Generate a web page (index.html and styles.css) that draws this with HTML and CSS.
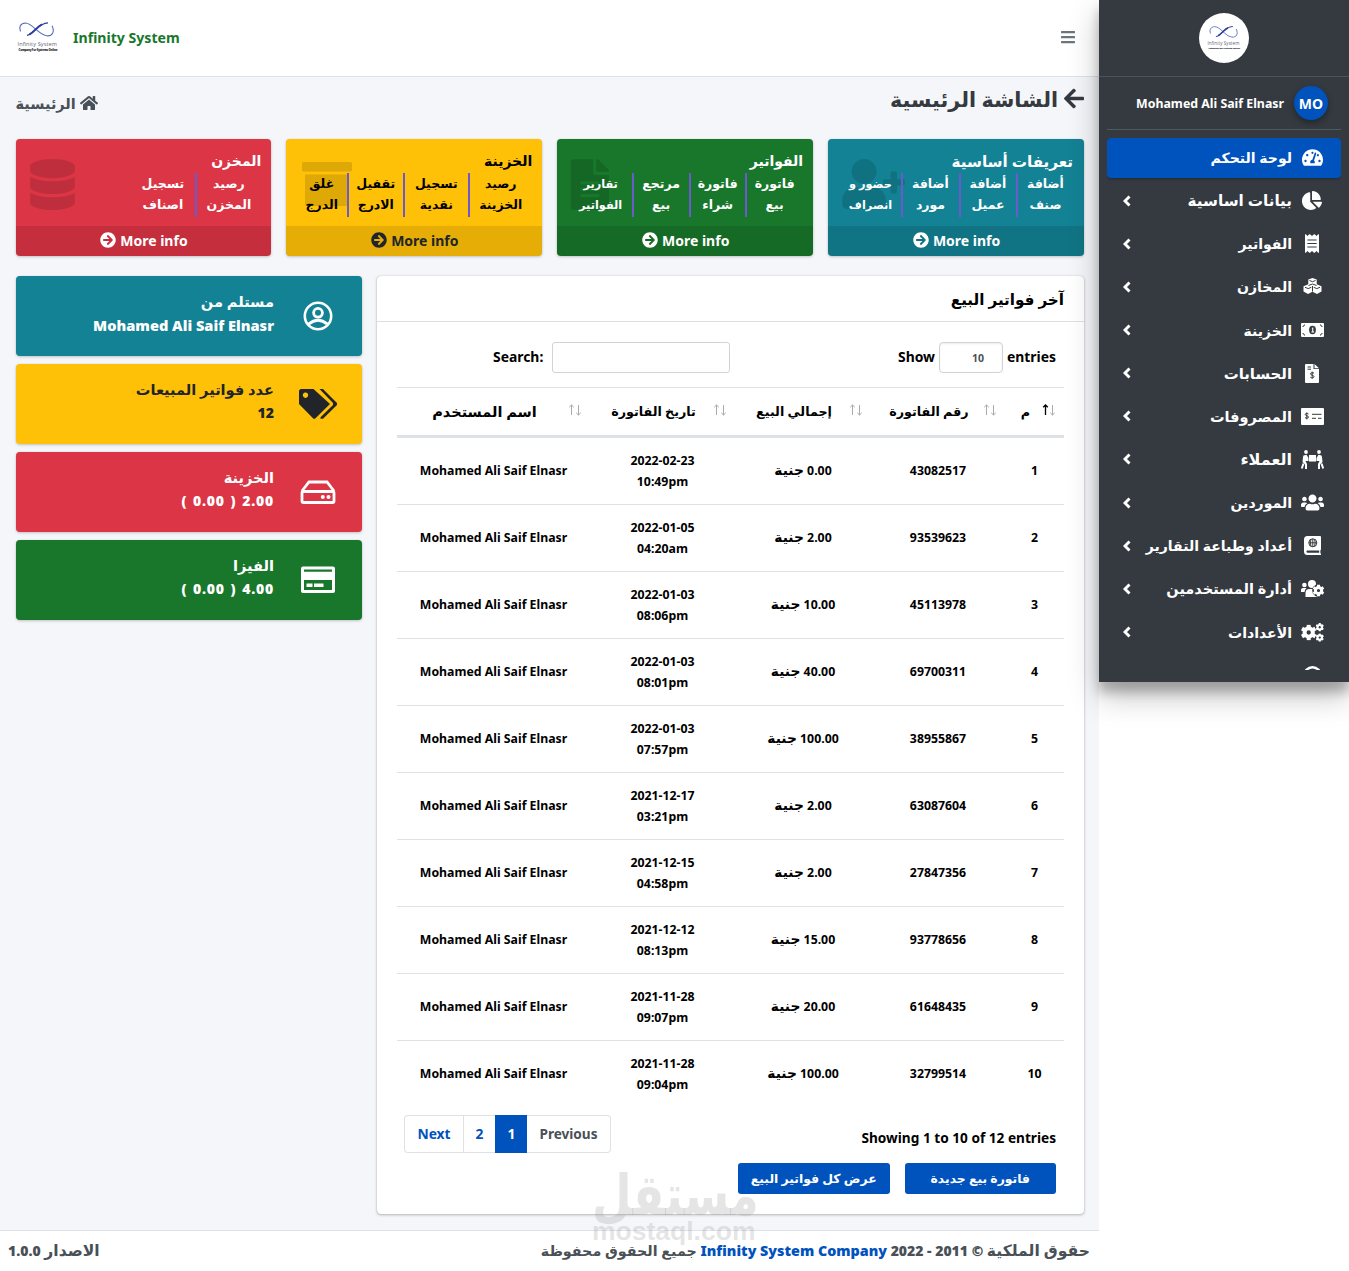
FILE: index.html
```html
<!DOCTYPE html>
<html lang="ar" dir="rtl">
<head>
<meta charset="utf-8">
<title>Infinity System</title>
<link rel="stylesheet" href="styles.css">
</head>
<body>
<svg class="defs" width="0" height="0" aria-hidden="true">
  <symbol id="go" viewBox="0 0 512 512"><path d="M256 8c137 0 248 111 248 248S393 504 256 504 8 393 8 256 119 8 256 8zm-28.9 143.6l75.5 72.4H120c-13.3 0-24 10.7-24 24v16c0 13.3 10.7 24 24 24h182.6l-75.5 72.4c-9.7 9.3-9.9 24.8-.4 34.3l11 10.9c9.4 9.4 24.6 9.4 33.9 0L404.3 273c9.4-9.4 9.4-24.6 0-33.9L271.6 106.3c-9.4-9.4-24.6-9.4-33.9 0l-11 10.9c-9.5 9.6-9.3 25.1.4 34.4z"/></symbol>
  <symbol id="chev" viewBox="0 0 8 12"><path d="M6.500 1.500L2 6l4.500 4.500" fill="none" stroke="currentColor" stroke-width="2.900"/></symbol>
  <symbol id="gear" viewBox="-10 -10 20 20"><circle r="5.200" fill="none" stroke="currentColor" stroke-width="5"/><g stroke="currentColor" stroke-width="5"><path d="M0-9.800V-6M0 6v3.800M-8.400-4.900L-5-3M5 3l3.400 1.900M-8.400 4.900L-5 3M5-3l3.400-1.900"/></g></symbol>
  <symbol id="sort" viewBox="0 0 14 12"><path d="M3.500 1v10M1.200 3.200L3.500 1l2.300 2.200M10.500 1v10M8.200 8.800l2.300 2.200 2.300-2.200" fill="none"/></symbol>
  <symbol id="sort-asc" viewBox="0 0 14 12"><path d="M3.500 1v10M1.200 3.200L3.500 1l2.300 2.200" fill="none" stroke="#000" stroke-width="1.300"/><path d="M10.500 1v10M8.200 8.800l2.300 2.200 2.300-2.200" fill="none"/></symbol>
  <symbol id="mark" viewBox="0 0 42 17">
    <path d="M4.500 10.500C2.500 6 4.500 2.200 9.500 2c7 0 12.500 11.500 21 12.800 6 .8 8.500-4 5.500-10" fill="none" stroke="#5a6fc0" stroke-width="1.100"/>
    <path d="M11 14.300c7-.8 10.500-12.300 21-12.500" fill="none" stroke="#2c3e9e" stroke-width="1.200"/><path d="M13.500 13.300c5-2.500 7.500-7.800 12.500-10" fill="none" stroke="#2c3e9e" stroke-width="2"/>
  </symbol>
</svg>
<div class="app">
  <aside class="sidebar">
    <div class="brand"><span class="brand-logo"><svg viewBox="0 0 42 32"><use href="#mark" width="42" height="17" y="0"/><text x="0.500" y="24.500" textLength="39.500">Infinity System</text><text class="tag" x="2" y="29.500" textLength="39">Company For Systems Online</text></svg></span></div>
    <div class="user"><span class="avatar">MO</span><span>Mohamed Ali Saif Elnasr</span></div>
    <nav class="nav">
      <a class="item active"><i><svg width="21" height="19" viewBox="0 0 576 512"><path d="M288 32C128.940 32 0 160.940 0 320c0 52.800 14.250 102.260 39.060 144.800 5.610 9.620 16.300 15.200 27.440 15.200h443c11.140 0 21.830-5.580 27.440-15.200C561.750 422.260 576 372.800 576 320c0-159.060-128.940-288-288-288zm0 64c14.710 0 26.580 10.130 30.320 23.650-1.110 2.260-2.640 4.230-3.450 6.670l-9.220 27.670c-5.130 3.490-10.970 6.010-17.640 6.010-17.670 0-32-14.330-32-32S270.330 96 288 96zM96 384c-17.670 0-32-14.330-32-32s14.330-32 32-32 32 14.330 32 32-14.330 32-32 32zm48-160c-17.670 0-32-14.330-32-32s14.330-32 32-32 32 14.330 32 32-14.330 32-32 32zm246.770-72.410l-61.330 184C343.130 347.330 352 364.540 352 384c0 11.720-3.380 22.550-8.880 32H232.880c-5.500-9.450-8.880-20.280-8.880-32 0-33.940 26.500-61.430 59.900-63.590l61.340-184.010c4.170-12.560 17.730-19.450 30.360-15.170 12.570 4.190 19.350 17.790 15.170 30.360zm14.660 57.200l15.520-46.550c3.470-1.290 7.130-2.230 11.050-2.230 17.670 0 32 14.330 32 32s-14.330 32-32 32c-11.380-.01-20.890-6.280-26.570-15.220zM480 384c-17.670 0-32-14.330-32-32s14.330-32 32-32 32 14.330 32 32-14.330 32-32 32z"/></svg></i><span>لوحة التحكم</span></a>
      <a class="item"><i><svg width="20" height="19" viewBox="0 0 544 512"><path d="M527.790 288H290.500l158.030 158.030c6.040 6.040 15.980 6.530 22.190.68 38.700-36.460 65.320-85.610 73.130-140.860 1.340-9.460-6.510-17.850-16.060-17.850zm-15.830-64.800C503.720 103.740 408.260 8.280 288.800.04 279.680-.59 272 7.100 272 16.240V240h223.770c9.140 0 16.820-7.680 16.190-16.800zM224 288V50.710c0-9.550-8.390-17.400-17.840-16.060C86.990 51.490-4.100 155.600.14 280.370 4.500 408.510 114.830 513.590 243.030 511.980c50.400-.63 96.970-16.870 135.260-44.030 7.900-5.600 8.420-17.230 1.570-24.080L224 288z"/></svg></i><span class="w3">بيانات اساسية</span><svg class="chev"><use href="#chev"/></svg></a>
      <a class="item"><i><svg width="14" height="19" viewBox="0 0 384 512"><path d="M358.400 3.200L320 48 265.600 3.200a15.900 15.900 0 0 0-19.200 0L192 48 137.600 3.200a15.900 15.900 0 0 0-19.200 0L64 48 25.600 3.200C15-4.700 0 2.800 0 16v480c0 13.200 15 20.700 25.600 12.800L64 464l54.400 44.800a15.900 15.900 0 0 0 19.200 0L192 464l54.400 44.800a15.900 15.900 0 0 0 19.200 0L320 464l38.400 44.800c10.500 7.900 25.600.4 25.600-12.800V16c0-13.200-15-20.700-25.600-12.800zM320 360c0 4.400-3.600 8-8 8H72c-4.400 0-8-3.600-8-8v-16c0-4.400 3.600-8 8-8h240c4.400 0 8 3.600 8 8v16zm0-96c0 4.400-3.600 8-8 8H72c-4.400 0-8-3.600-8-8v-16c0-4.400 3.600-8 8-8h240c4.400 0 8 3.600 8 8v16zm0-96c0 4.400-3.600 8-8 8H72c-4.400 0-8-3.600-8-8v-16c0-4.400 3.600-8 8-8h240c4.400 0 8 3.600 8 8v16z"/></svg></i><span>الفواتير</span><svg class="chev"><use href="#chev"/></svg></a>
      <a class="item"><i><svg width="19" height="17" viewBox="0 0 19 17"><path d="M9.500 0l4.200 1.600v4.600l4.800 2v5.400L14 16l-4.500-2.200L5 16 .5 13.600V8.200l4.800-2V1.600z"/><path class="cut" d="M6.500 2.500l3 1.200 3-1.200M9.500 6l-4 1.500M9.500 6l4 1.500M2 9.300l3.200 1.300L8.300 9.300M10.700 9.300l3.100 1.300L17 9.300M9.500 8v5.500"/></svg></i><span>المخازن</span><svg class="chev"><use href="#chev"/></svg></a>
      <a class="item"><i><svg width="23" height="14" viewBox="0 0 23 14"><rect width="23" height="14" rx="1"/><ellipse class="hole" cx="11.500" cy="7" rx="3.400" ry="4.200"/><path d="M10.600 5.200l1-.6h.7v4h.8v.8h-2.700v-.8h.8V5.600z"/><path class="cut" d="M1.500 3.500a2 2 0 0 0 2-2M19.500 1.500a2 2 0 0 0 2 2M1.500 10.500a2 2 0 0 1 2 2M19.500 12.500a2 2 0 0 1 2-2"/></svg></i><span>الخزينة</span><svg class="chev"><use href="#chev"/></svg></a>
      <a class="item"><i><svg width="14" height="19" viewBox="0 0 14 19"><path d="M1 0h7.500v5H14v13a1 1 0 0 1-1 1H1a1 1 0 0 1-1-1V1a1 1 0 0 1 1-1zM9.500 0L14 4.200H9.500z"/><path class="cut" d="M2.500 3H6M2.500 5.200H6M9 9.200c-1.200-.8-3.500-.8-3.500.7 0 1.600 3.500 1 3.500 2.800 0 1.500-2.500 1.500-3.700.6M7.200 7.600v7"/></svg></i><span class="w2">الحسابات</span><svg class="chev"><use href="#chev"/></svg></a>
      <a class="item"><i><svg width="23" height="17" viewBox="0 0 23 17"><rect width="23" height="17" rx="1"/><path class="cut" d="M11 6.300h9.500M11 10.300h4M17 10.300h3.500M7.500 5.900c-1.200-.8-3.300-.7-3.300.6 0 1.500 3.300.9 3.300 2.600 0 1.400-2.300 1.400-3.500.5M5.800 4.400v7"/></svg></i><span class="w1">المصروفات</span><svg class="chev"><use href="#chev"/></svg></a>
      <a class="item"><i><svg width="23" height="19" viewBox="0 0 23 19"><circle cx="5" cy="2" r="1.900"/><circle cx="18" cy="2" r="1.900"/><rect x="8" y="5" width="7" height="6.500"/><path d="M2.500 5.500l3-.7 2 3.200v3H4.500L6 14v5H4v-4.500L1.500 12 2 7zM20.500 5.500l-3-.7-2 3.200v3h3L17 14v5h2v-4.500l2.500-2.500-.5-5z"/><path d="M2.500 13.500L.8 18.500M20.500 13.500l1.700 5" stroke="currentColor" stroke-width="2"/></svg></i><span class="w4">العملاء</span><svg class="chev"><use href="#chev"/></svg></a>
      <a class="item"><i><svg width="23" height="19" viewBox="0 0 640 512"><path d="M96 224c35.300 0 64-28.700 64-64s-28.700-64-64-64-64 28.700-64 64 28.700 64 64 64zm448 0c35.300 0 64-28.700 64-64s-28.700-64-64-64-64 28.700-64 64 28.700 64 64 64zm32 32h-64c-17.600 0-33.500 7.100-45.100 18.600 40.300 22.100 68.900 62 75.100 109.400h66c17.700 0 32-14.300 32-32v-32c0-35.300-28.700-64-64-64zm-256 0c61.900 0 112-50.100 112-112S381.900 32 320 32 208 82.100 208 144s50.100 112 112 112zm76.800 32h-8.300c-20.800 10-43.900 16-68.500 16s-47.600-6-68.500-16h-8.300C179.600 288 128 339.600 128 403.200V432c0 26.500 21.500 48 48 48h288c26.500 0 48-21.500 48-48v-28.800c0-63.600-51.600-115.200-115.200-115.200zm-223.700-13.400C161.500 263.100 145.600 256 128 256H64c-35.300 0-64 28.700-64 64v32c0 17.700 14.300 32 32 32h65.900c6.300-47.400 34.900-87.300 75.200-109.400z"/></svg></i><span>الموردين</span><svg class="chev"><use href="#chev"/></svg></a>
      <a class="item"><i><svg width="17" height="19" viewBox="0 0 17 19"><path d="M3.500 0H16a1 1 0 0 1 1 1v12.500l-.6.800v3l.6.500V19H3.500A3.500 3.500 0 0 1 0 15.500v-12A3.500 3.500 0 0 1 3.500 0z"/><path class="hole" d="M3.500 14.500h11.700v2.200H3.500a1.100 1.100 0 0 1 0-2.200z"/><circle class="cut" cx="8.800" cy="6.800" r="4"/><path class="cut" d="M4.800 6.800h8M8.800 2.800v8M7 3.400q-1.200 3.400 0 6.800M10.600 3.400q1.200 3.400 0 6.800"/></svg></i><span>أعداد وطباعة التقارير</span><svg class="chev"><use href="#chev"/></svg></a>
      <a class="item"><i><svg width="23" height="17" viewBox="0 0 23 17"><circle cx="3.400" cy="5" r="2.300"/><circle cx="11" cy="4" r="4"/><path d="M0 12V9.500A2 2 0 0 1 2 8h3.500Q3.500 10 3.500 12zM4.500 17v-4q0-4 4-4h5l3 8z"/><g transform="translate(17.500 10.500) scale(.6)"><circle r="10.500" class="hole"/><use href="#gear" x="-10" y="-10" width="20" height="20"/></g></svg></i><span class="w1">أدارة المستخدمين</span><svg class="chev"><use href="#chev"/></svg></a>
      <a class="item"><i><svg width="23" height="19" viewBox="0 0 23 19"><use href="#gear" x="-.3" y="1.500" width="16" height="16"/><use href="#gear" x="14.500" y="0" width="8.500" height="8.500"/><use href="#gear" x="14.500" y="10.300" width="8.500" height="8.500"/></svg></i><span>الأعدادات</span><svg class="chev"><use href="#chev"/></svg></a>
      <a class="item"><i><svg width="19" height="19" viewBox="0 0 19 19"><circle cx="9.500" cy="9.500" r="8.200" fill="none" stroke="currentColor" stroke-width="2.400"/></svg></i></a>
    </nav>
  </aside>

  <div class="page">
    <header class="topbar">
      <svg class="bars" viewBox="0 0 448 512"><path d="M16 132h416c8.800 0 16-7.200 16-16V76c0-8.800-7.200-16-16-16H16C7.200 60 0 67.200 0 76v40c0 8.800 7.200 16 16 16zm0 160h416c8.800 0 16-7.200 16-16v-40c0-8.800-7.200-16-16-16H16c-8.800 0-16 7.200-16 16v40c0 8.800 7.200 16 16 16zm0 160h416c8.800 0 16-7.200 16-16v-40c0-8.800-7.200-16-16-16H16c-8.800 0-16 7.200-16 16v40c0 8.800 7.200 16 16 16z"/></svg>
      <div class="site"><svg viewBox="0 0 42 32"><use href="#mark" width="42" height="17" y="0"/><text x="1.500" y="24.500" textLength="39.500">Infinity System</text><text class="tag" x="2.500" y="29.500" textLength="39">Company For Systems Online</text></svg><span>Infinity System</span></div>
    </header>

    <main class="content">
      <div class="heading">
        <h1><svg width="20" height="23" viewBox="0 0 448 512"><path d="M257.500 445.100l-22.200 22.200c-9.400 9.400-24.600 9.400-33.900 0L7 273c-9.400-9.400-9.400-24.600 0-33.900L201.400 44.700c9.400-9.400 24.600-9.400 33.900 0l22.200 22.200c9.500 9.500 9.300 25-.4 34.300L136.600 216H424c13.300 0 24 10.700 24 24v32c0 13.300-10.700 24-24 24H136.600l120.500 114.800c9.800 9.300 10 24.800.4 34.300z"/></svg><span>الشاشة الرئيسية</span></h1>
        <div class="crumb"><svg width="18" height="16" viewBox="0 0 576 512"><path d="M280.370 148.260L96 300.110V464a16 16 0 0 0 16 16l112.060-.29a16 16 0 0 0 15.920-16V368a16 16 0 0 1 16-16h64a16 16 0 0 1 16 16v95.640a16 16 0 0 0 16 16.050L464 480a16 16 0 0 0 16-16V300L295.670 148.260a12.190 12.190 0 0 0-15.300 0zM571.600 251.470L488 182.560V44.050a12 12 0 0 0-12-12h-56a12 12 0 0 0-12 12v72.610L318.470 43a48 48 0 0 0-61 0L4.340 251.470a12 12 0 0 0-1.600 16.900l25.500 31A12 12 0 0 0 45.150 301l235.220-193.740a12.190 12.190 0 0 1 15.300 0L530.900 301a12 12 0 0 0 16.900-1.600l25.500-31a12 12 0 0 0-1.700-16.930z"/></svg><span>الرئيسية</span></div>
      </div>

      <section class="tiles">
        <div class="tile teal">
          <svg class="ghost" width="63" height="50" viewBox="0 0 640 512"><path d="M624 208h-64v-64c0-8.800-7.200-16-16-16h-32c-8.800 0-16 7.200-16 16v64h-64c-8.800 0-16 7.200-16 16v32c0 8.800 7.200 16 16 16h64v64c0 8.800 7.200 16 16 16h32c8.800 0 16-7.200 16-16v-64h64c8.800 0 16-7.200 16-16v-32c0-8.800-7.200-16-16-16zm-400 48c70.700 0 128-57.300 128-128S294.700 0 224 0 96 57.300 96 128s57.300 128 128 128zm89.600 32h-16.700c-22.200 10.200-46.900 16-72.900 16s-50.600-5.800-72.900-16h-16.700C60.200 288 0 348.200 0 422.400V464c0 26.500 21.500 48 48 48h352c26.500 0 48-21.500 48-48v-41.600c0-74.200-60.200-134.400-134.400-134.400z"/></svg>
          <h3 class="long">تعريفات أساسية</h3>
          <div class="links"><a>أضافة<br>صنف</a><a>أضافة<br>عميل</a><a>أضافة<br>مورد</a><a class="sm">حضور و<br>انصراف</a></div>
          <div class="more"><span>More info</span><svg><use href="#go"/></svg></div>
        </div>
        <div class="tile green">
          <svg class="ghost" width="38" height="51" viewBox="0 0 384 512"><path d="M224 136V0H24C10.700 0 0 10.700 0 24v464c0 13.300 10.700 24 24 24h336c13.300 0 24-10.700 24-24V160H248c-13.200 0-24-10.800-24-24zm64 236c0 6.600-5.400 12-12 12H108c-6.600 0-12-5.400-12-12v-8c0-6.600 5.400-12 12-12h168c6.600 0 12 5.400 12 12v8zm0-64c0 6.600-5.400 12-12 12H108c-6.600 0-12-5.400-12-12v-8c0-6.600 5.400-12 12-12h168c6.600 0 12 5.400 12 12v8zm0-72v8c0 6.600-5.400 12-12 12H108c-6.600 0-12-5.400-12-12v-8c0-6.600 5.400-12 12-12h168c6.600 0 12 5.400 12 12zm96-114.100v6.100H256V0h6.100c6.400 0 12.500 2.500 17 7l97.900 98c4.500 4.500 7 10.600 7 16.900z"/></svg>
          <h3>الفواتير</h3>
          <div class="links"><a>فاتورة<br>بيع</a><a>فاتورة<br>شراء</a><a>مرتجع<br>بيع</a><a class="sm">تقارير<br>الفواتير</a></div>
          <div class="more"><span>More info</span><svg><use href="#go"/></svg></div>
        </div>
        <div class="tile yellow">
          <svg class="ghost" width="50" height="45" viewBox="0 0 50 45"><rect width="50" height="9.500" rx="1.500"/><path d="M3 12.500h44V42a2 2 0 0 1-2 2H5a2 2 0 0 1-2-2z"/></svg>
          <h3>الخزينة</h3>
          <div class="links"><a>رصيد<br>الخزينة</a><a>تسجيل<br>نقدية</a><a>تقفيل<br>الادرج</a><a>غلق<br>الدرج</a></div>
          <div class="more"><span>More info</span><svg><use href="#go"/></svg></div>
        </div>
        <div class="tile red">
          <svg class="ghost" width="45" height="51" viewBox="0 0 448 512"><path d="M448 73.143v45.714C448 159.143 347.667 192 224 192S0 159.143 0 118.857V73.143C0 32.857 100.333 0 224 0s224 32.857 224 73.143zM448 176v102.857C448 319.143 347.667 352 224 352S0 319.143 0 278.857V176c48.125 33.143 136.208 48.572 224 48.572S399.874 209.143 448 176zm0 160v102.857C448 479.143 347.667 512 224 512S0 479.143 0 438.857V336c48.125 33.143 136.208 48.572 224 48.572S399.874 369.143 448 336z"/></svg>
          <h3>المخزن</h3>
          <div class="links"><a>رصيد<br>المخزن</a><a>تسجيل<br>اصناف</a></div>
          <div class="more"><span>More info</span><svg><use href="#go"/></svg></div>
        </div>
      </section>

      <div class="columns">
        <section class="card">
          <h2>آخر فواتير البيع</h2>
          <div class="tools">
            <label class="length" dir="ltr"><span>Show</span><span class="select">10</span><span>entries</span></label>
            <label class="search" dir="ltr"><span>Search:</span><span class="field"></span></label>
          </div>
          <table>
            <colgroup><col class="c1"><col class="c2"><col class="c3"><col class="c4"><col class="c5"></colgroup>
            <thead><tr>
              <th><div>م<svg><use href="#sort-asc"/></svg></div></th>
              <th><div>رقم الفاتورة<svg><use href="#sort"/></svg></div></th>
              <th><div>إجمالي البيع<svg><use href="#sort"/></svg></div></th>
              <th><div>تاريخ الفاتورة<svg><use href="#sort"/></svg></div></th>
              <th class="wide"><div>اسم المستخدم<svg><use href="#sort"/></svg></div></th>
            </tr></thead>
            <tbody>
              <tr><td>1</td><td>43082517</td><td>0.00 <b>جنية</b></td><td>2022-02-23<br>10:49pm</td><td>Mohamed Ali Saif Elnasr</td></tr>
              <tr><td>2</td><td>93539623</td><td>2.00 <b>جنية</b></td><td>2022-01-05<br>04:20am</td><td>Mohamed Ali Saif Elnasr</td></tr>
              <tr><td>3</td><td>45113978</td><td>10.00 <b>جنية</b></td><td>2022-01-03<br>08:06pm</td><td>Mohamed Ali Saif Elnasr</td></tr>
              <tr><td>4</td><td>69700311</td><td>40.00 <b>جنية</b></td><td>2022-01-03<br>08:01pm</td><td>Mohamed Ali Saif Elnasr</td></tr>
              <tr><td>5</td><td>38955867</td><td>100.00 <b>جنية</b></td><td>2022-01-03<br>07:57pm</td><td>Mohamed Ali Saif Elnasr</td></tr>
              <tr><td>6</td><td>63087604</td><td>2.00 <b>جنية</b></td><td>2021-12-17<br>03:21pm</td><td>Mohamed Ali Saif Elnasr</td></tr>
              <tr><td>7</td><td>27847356</td><td>2.00 <b>جنية</b></td><td>2021-12-15<br>04:58pm</td><td>Mohamed Ali Saif Elnasr</td></tr>
              <tr><td>8</td><td>93778656</td><td>15.00 <b>جنية</b></td><td>2021-12-12<br>08:13pm</td><td>Mohamed Ali Saif Elnasr</td></tr>
              <tr><td>9</td><td>61648435</td><td>20.00 <b>جنية</b></td><td>2021-11-28<br>09:07pm</td><td>Mohamed Ali Saif Elnasr</td></tr>
              <tr><td>10</td><td>32799514</td><td>100.00 <b>جنية</b></td><td>2021-11-28<br>09:04pm</td><td>Mohamed Ali Saif Elnasr</td></tr>
            </tbody>
          </table>
          <div class="pager-row">
            <div class="info" dir="ltr">Showing 1 to 10 of 12 entries</div>
            <div class="pager"><span class="prev">Previous</span><span class="on">1</span><span class="two">2</span><span class="next">Next</span></div>
          </div>
          <div class="actions"><a>فاتورة بيع جديدة</a><a>عرض كل فواتير البيع</a></div>
        </section>

        <section class="stats">
          <div class="stat teal"><svg viewBox="0 0 40 40"><g fill="none" stroke="currentColor"><circle cx="20" cy="20" r="13.200" stroke-width="2.600"/><circle cx="20" cy="16.800" r="4.400" stroke-width="2.800"/><path d="M10.500 28.200q9.500-8 19 0" stroke-width="3"/></g></svg><div><span>مستلم من</span><strong class="name" dir="ltr">Mohamed Ali Saif Elnasr</strong></div></div>
          <div class="stat yellow"><svg viewBox="0 0 40 40"><path d="M2.500 5h13L32 20 17 34.700h-1.500L1 20V6.500zM7.500 8.500a2.700 2.700 0 1 0 .01 0z" fill-rule="evenodd"/><path d="M21.500 5H25l14 14v2L25 34.700h-2.500v-1.500L35 21v-2z"/></svg><div><span>عدد فواتير المبيعات</span><strong>12</strong></div></div>
          <div class="stat red"><svg viewBox="0 0 40 40"><g fill="none" stroke="currentColor" stroke-width="2.800"><path d="M4 19L11 10h18l7 9"/><rect x="4" y="19.500" width="32" height="11" rx="1"/></g><circle cx="24.800" cy="25" r="2"/><circle cx="30.500" cy="25" r="2"/></svg><div><span>الخزينة</span><strong class="sum">2.00 ( 0.00 )</strong></div></div>
          <div class="stat green"><svg viewBox="0 0 40 40"><path fill-rule="evenodd" d="M5 6.500h30a2 2 0 0 1 2 2V31a2 2 0 0 1-2 2H5a2 2 0 0 1-2-2V8.500a2 2 0 0 1 2-2zM6 9.500v2.300h28V9.500zM6 20v10h28V20z"/><path d="M8.500 23.500h6v3.500h-6zM16 23.500h9.500V27H16z"/></svg><div><span>الفيزا</span><strong class="sum">4.00 ( 0.00 )</strong></div></div>
        </section>
      </div>
    </main>

    <footer class="footer">
      <div class="rights"><strong><span class="owner">حقوق الملكية</span> © 2011 - 2022 <a>Infinity System Company</a></strong> <span class="all">جميع الحقوق محفوظة</span></div>
      <div class="version"><span class="owner">الاصدار</span> 1.0.0</div>
    </footer>
    <div class="watermark"><span class="wm-ar">مستقل</span><span class="wm-en">mostaql.com</span></div>
  </div>
</div>
</body>
</html>
```
FILE: styles.css
```css
* { box-sizing: border-box; }
body { margin: 0; background: #fff; color: #000; font: 700 14px/21px "Noto Sans", "DejaVu Sans", sans-serif; overflow: hidden; }
svg { fill: currentColor; flex: none; }
.defs { position: absolute; }
h1, h2, h3 { margin: 0; }
.app { display: flex; height: 1271px; }
.page { position: relative; flex: 1; display: flex; flex-direction: column; background: #f4f6f9; }

.sidebar { width: 250px; height: 682px; background: #343a40; color: #fff; position: relative; z-index: 2; box-shadow: 0 14px 28px rgba(0,0,0,.25), 0 10px 10px rgba(0,0,0,.22); }
.brand { height: 77px; border-bottom: 1px solid #4b545c; display: flex; align-items: center; justify-content: center; }
.brand-logo { width: 50px; height: 50px; border-radius: 50%; background: #fff; display: flex; align-items: center; justify-content: center; direction: ltr; }
.brand-logo svg { width: 34px; height: 26px; }
svg text { font: 400 5.600px "Open Sans", sans-serif; fill: #667; }
svg .tag { font-size: 2.900px; font-weight: 800; fill: #222; }
.user { margin: 0 8px; height: 53px; border-bottom: 1px solid #4f5962; display: flex; align-items: center; gap: 10px; padding-right: 13px; font-size: 12.350px; }
.avatar { width: 34px; height: 34px; border-radius: 50%; background: #0052bd; display: flex; align-items: center; justify-content: center; font-size: 14px; box-shadow: 0 3px 6px rgba(0,0,0,.35); }
.nav { margin: 8px 8px 0; height: 532px; overflow: hidden; display: flex; flex-direction: column; gap: 3.15px; }
.item { flex: none; height: 40px; border-radius: 4px; display: flex; align-items: center; padding: 0 16px 1px; font-size: 14.050px; }
.item i { width: 26px; display: flex; justify-content: center; margin-left: 7px; }
.item span { flex: 1; white-space: nowrap; }
.item .w1 { font-size: 14.500px; }
.item .w2 { font-size: 14.900px; }
.item .w3 { font-size: 15.200px; }
.item .w4 { font-size: 16px; }
.active { background: #0052bd; box-shadow: 0 1px 3px rgba(0,0,0,.3); }
.chev { width: 8px; height: 12px; }
.cut { fill: none; stroke: #343a40; stroke-width: 1; }
.hole { fill: #343a40; }

.topbar { height: 77px; background: #fff; border-bottom: 1px solid #dee2e6; display: flex; align-items: center; justify-content: space-between; padding: 0 24px 2px 16px; }
.bars { width: 14px; height: 16px; color: #6c757d; }
.site { direction: ltr; display: flex; align-items: center; gap: 15px; color: #18772b; font-size: 14.100px; }
.site svg { width: 42px; height: 32px; }

.content { height: 1153px; padding: 0 15px 0 15.500px; }
.heading { height: 62px; display: flex; justify-content: space-between; padding-top: 10px; }
h1 { display: flex; align-items: center; height: 24px; gap: 6px; color: #343a40; font-size: 20.700px; }
h1 svg { margin-top: -2px; }
.crumb { display: flex; align-items: center; gap: 4px; height: 32px; color: #495057; font-size: 14.500px; }
.tiles { display: grid; grid-template-columns: repeat(4, 1fr); gap: 15px; }
.tile { position: relative; height: 117px; border-radius: 4px; overflow: hidden; color: #fff; box-shadow: 0 0 1px rgba(0,0,0,.13), 0 1px 3px rgba(0,0,0,.2); display: flex; flex-direction: column; }
.teal { background: #138294; color: #fff; }
.green { background: #18772b; color: #fff; }
.yellow { background: #ffc107; color: #212529; }
.red { background: #dc3545; color: #fff; }
.tile.yellow h3, .tile.yellow .links { color: #000; }
.tile h3 { font-size: 14px; line-height: 24px; padding: 10px 10px 0 0; position: relative; }
.tile h3.long { font-size: 15.200px; padding-right: 11px; }
.links { display: grid; position: relative; height: 44px; padding-right: 10.500px; justify-content: start; text-align: center; font-size: 12.500px; line-height: 21px; }
.links a + a { border-right: 2px solid #6a5acd; }
.links .sm { font-size: 11.300px; }
.teal .links { grid-template-columns: 56px 57px 58px 62px; }
.green .links { grid-template-columns: 56px 56px 57px 64px; }
.yellow .links { grid-template-columns: 62px 65px 56px 52px; }
.red .links { grid-template-columns: 64px 66px; }
.ghost { position: absolute; left: 14px; top: 20px; color: rgba(0,0,0,.13); }
.yellow .ghost { left: 16px; top: 23px; }
.more { position: relative; margin-top: auto; height: 30px; background: rgba(0,0,0,.1); display: flex; align-items: center; justify-content: center; gap: 4px; font-size: 14px; padding: 0 0 2px 1px; }
.more svg { width: 16px; height: 16px; }
.columns { display: grid; grid-template-columns: 707px 346px; gap: 15px; margin-top: 20px; }

.card { background: #fff; height: 938px; border-radius: 4px; box-shadow: 0 0 1px rgba(0,0,0,.3), 0 1px 3px rgba(0,0,0,.25); }
h2 { height: 46px; border-bottom: 1px solid #dfdfdf; padding: 0 20px; font-size: 15.200px; line-height: 47px; }
.tools { height: 65px; display: flex; padding: 20px 28px 0; gap: 168px; }
label { display: flex; align-items: center; height: 31px; font-size: 13.900px; }
.length { width: 158px; justify-content: space-between; }
.length > span:not(.select), .search > span:first-child { padding-bottom: 2px; }
.select { width: 64px; height: 31px; border: 1px solid #ced4da; border-radius: 4px; color: #495057; font-size: 10.500px; line-height: 31px; padding-left: 32px; box-shadow: inset 0 1px 2px rgba(0,0,0,.075); }
.search { width: 237px; justify-content: space-between; }
.field { width: 178px; height: 31px; border: 1px solid #ced4da; border-radius: 3px; }
table { width: 667px; margin: 0 20px; border-collapse: separate; border-spacing: 0; table-layout: fixed; text-align: center; font-size: 12.300px; }
.c1 { width: 59px; } .c2 { width: 134px; } .c3 { width: 136px; } .c4 { width: 145px; } .c5 { width: 193px; }
th { height: 51px; padding: 0; border-top: 1px solid #dee2e6; border-bottom: 3px solid #dee2e6; font-size: 12.700px; }
th.wide { font-size: 14.500px; }
th div { position: relative; padding-right: 18px; }
th svg { position: absolute; right: 8px; top: 3px; width: 14px; height: 12px; stroke: #aaa; }
td { height: 67px; padding: 0 0 1px; border-bottom: 1px solid #dee2e6; }
tr:last-child td { border-bottom: 0; padding-bottom: 2px; }
td b { font-size: 13.800px; line-height: 16px; }
.pager-row { display: flex; justify-content: space-between; padding: 7px 28px 0 27px; height: 55px; }
.info { line-height: 46px; font-size: 13.650px; }
.pager { display: flex; height: 38px; line-height: 36px; text-align: center; color: #0052bd; font-size: 13.800px; }
.pager span { border: 1px solid #dee2e6; border-right: 0; }
.pager .prev { width: 84px; color: #495057; border-right: 1px solid #dee2e6; border-left: 0; border-radius: 0 4px 4px 0; font-size: 13.600px; }
.pager .on { width: 32px; background: #0052bd; color: #fff; border-color: #0052bd; }
.pager .two { width: 32px; }
.pager .next { width: 59px; border-radius: 4px 0 0 4px; }
.actions { display: flex; gap: 15px; padding-right: 28px; }
.actions a { width: 151.500px; height: 31px; border-radius: 3px; background: #0052bd; color: #fff; text-align: center; line-height: 31px; font-size: 12.400px; }

.stats { display: flex; flex-direction: column; gap: 8px; }
.stat { height: 80px; border-radius: 4px; box-shadow: 0 0 1px rgba(0,0,0,.13), 0 1px 3px rgba(0,0,0,.2); display: flex; align-items: center; padding-right: 24px; gap: 24px; }
.stat svg { width: 40px; height: 40px; }
.stat div { display: flex; flex-direction: column; line-height: 24px; padding-bottom: 6px; }
.stat span { font-size: 14.600px; }
.stat strong { font-size: 14px; font-weight: 900; text-align: right; }
.stat .name { font-size: 14.600px; }
.stat .sum { letter-spacing: .8px; word-spacing: 1.300px; }

.footer { flex: 1; background: #fff; border-top: 1px solid #dee2e6; color: #495057; display: flex; justify-content: space-between; padding: 9px 9px 0 8px; line-height: 21px; }
.footer strong, .version { font-weight: 900; }
.footer a { color: #0052bd; font-size: 14.300px; }
.owner { font-size: 15.600px; }
.all { font-size: 14.300px; }
.watermark { position: absolute; left: 592px; top: 1166px; width: 164px; height: 80px; color: rgba(150,152,156,.25); pointer-events: none; }
.watermark span { position: absolute; left: 0; white-space: nowrap; }
.wm-ar { top: 4px; font: 700 57px/50px "DejaVu Sans", sans-serif; transform: scaleX(.8); transform-origin: 0 0; }
.wm-en { bottom: -1px; font: 700 26.500px/32px "Liberation Sans", sans-serif; }
```
